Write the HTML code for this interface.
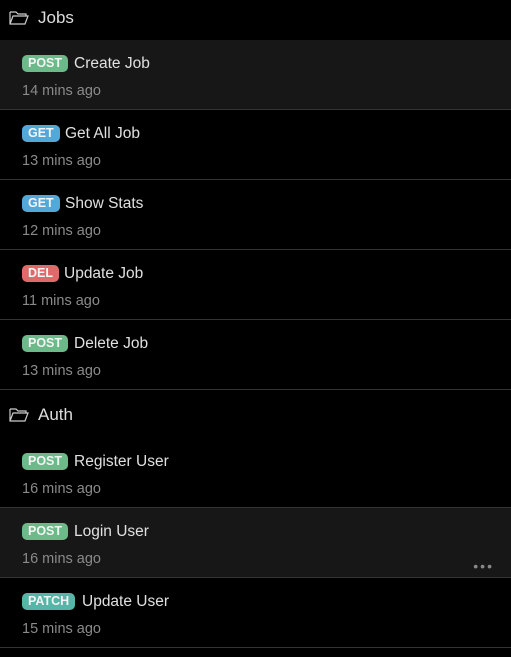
<!DOCTYPE html>
<html><head><style>
body{margin:0;background:#000;width:511px;height:657px;overflow:hidden;font-family:"Liberation Sans",sans-serif;color:#ddd}
.hdr{position:absolute;left:0;width:511px;height:40px}
.hdr svg{position:absolute;left:9px;top:10px}
.hdr span{position:absolute;left:38px;top:8px;font-size:17px;color:#ddd}
.row{position:absolute;left:0;width:511px;height:69px;border-bottom:1px solid #333}
.hl{background:#171717}
.b{position:absolute;left:22px;top:15px;height:17px;line-height:17px;padding:0 6px;border-radius:5px;font-size:12.5px;font-weight:bold;color:#f4f4f4}
.t{position:absolute;top:15px;font-size:15.5px;color:#e0e0e0}
.tm{position:absolute;left:22px;top:43px;font-size:14.5px;color:#8a8a8a}
.post{background:#6cb98a}.get{background:#52a8d8}.del{background:#e06a6a}.patch{background:#55b5a6}
.dots{position:absolute;right:17px;top:50px;font-size:14px;color:#888;letter-spacing:2px}
</style></head><body>
<div class="hdr" style="top:0"><svg width="20" height="16" viewBox="0 0 20 16" fill="none" stroke="#ccc" stroke-width="1.2"><path d="M1 2h6l2 2h8v2M1 2v12h15l3-8H4l-3 8"/></svg><span>Jobs</span></div>
<div class="row hl" style="top:40px"><span class="b post">POST</span><span class="t" style="left:74px">Create Job</span><span class="tm">14 mins ago</span></div>
<div class="row" style="top:110px"><span class="b get">GET</span><span class="t" style="left:65px">Get All Job</span><span class="tm">13 mins ago</span></div>
<div class="row" style="top:180px"><span class="b get">GET</span><span class="t" style="left:65px">Show Stats</span><span class="tm">12 mins ago</span></div>
<div class="row" style="top:250px"><span class="b del">DEL</span><span class="t" style="left:64px">Update Job</span><span class="tm">11 mins ago</span></div>
<div class="row" style="top:320px"><span class="b post">POST</span><span class="t" style="left:74px">Delete Job</span><span class="tm">13 mins ago</span></div>
<div class="hdr" style="top:397px"><svg width="20" height="16" viewBox="0 0 20 16" fill="none" stroke="#ccc" stroke-width="1.2"><path d="M1 2h6l2 2h8v2M1 2v12h15l3-8H4l-3 8"/></svg><span>Auth</span></div>
<div class="row" style="top:438px"><span class="b post">POST</span><span class="t" style="left:74px">Register User</span><span class="tm">16 mins ago</span></div>
<div class="row hl" style="top:508px"><span class="b post">POST</span><span class="t" style="left:74px">Login User</span><span class="tm">16 mins ago</span><span class="dots">•••</span></div>
<div class="row" style="top:578px"><span class="b patch">PATCH</span><span class="t" style="left:82px">Update User</span><span class="tm">15 mins ago</span></div>
</body></html>
